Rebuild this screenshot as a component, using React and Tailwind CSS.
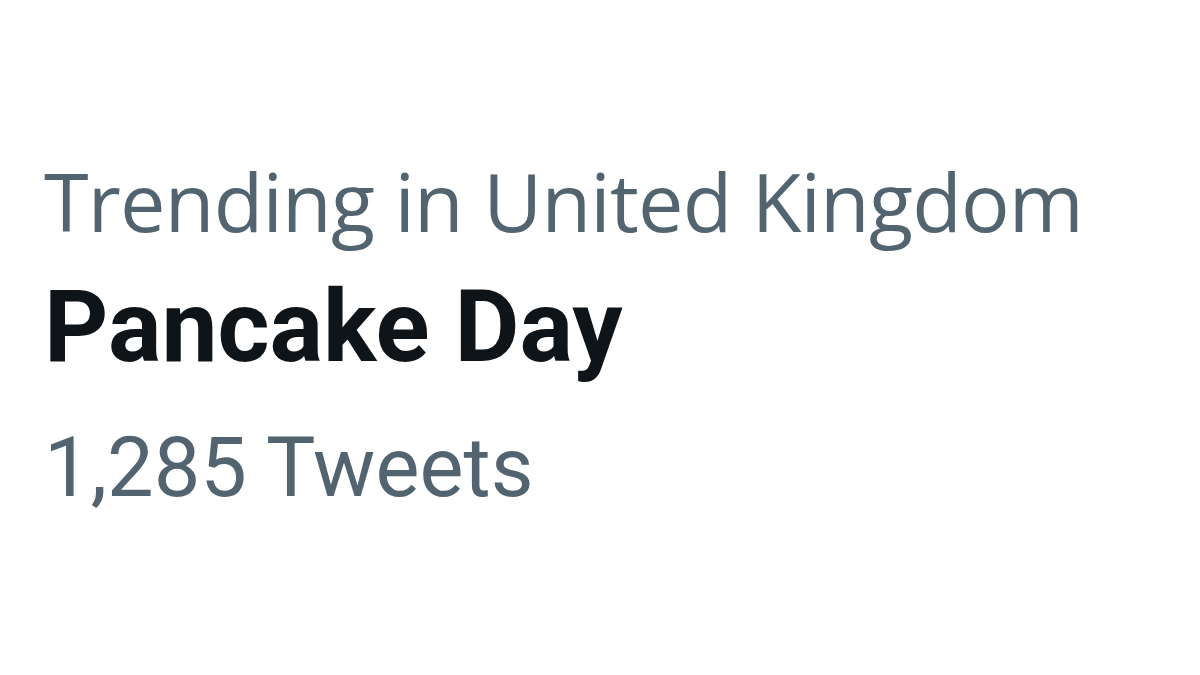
export default function App() {
  return (
    <div className="w-[1200px] h-[675px] bg-white overflow-hidden">
      <div className="pl-[44px] pt-[146px] flex flex-col">
        <div className="font-['Open_Sans',sans-serif] text-[81px] leading-[110px] text-[#536471] tracking-[-0.8px]">
          Trending in United Kingdom
        </div>
        <div className="font-['Roboto',sans-serif] text-[100px] leading-[142px] font-bold text-[#0f1419]">
          Pancake Day
        </div>
        <div className="font-['Roboto',sans-serif] text-[83px] leading-[139px] text-[#536471]">
          1,285 Tweets
        </div>
      </div>
    </div>
  );
}
